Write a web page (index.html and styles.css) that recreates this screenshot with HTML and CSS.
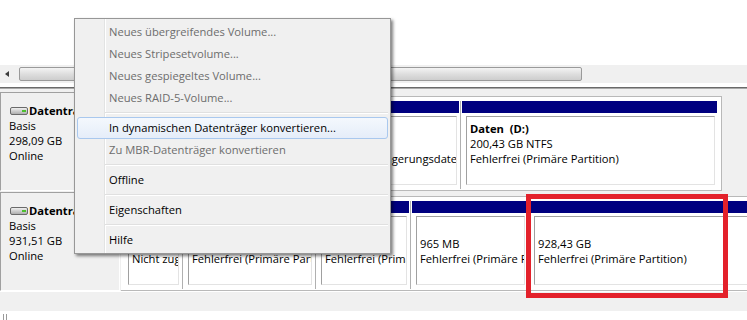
FILE: index.html
```html
<!DOCTYPE html>
<html>
<head>
    <title>Datenträgerverwaltung</title>
    <link rel="stylesheet" href="styles.css">
</head>
<body>
    <div class="top"></div>
    <div class="hscroll">
        <span class="arrow"></span>
        <div class="thumb"></div>
    </div>
    <div class="rule"></div>

    <div class="disks">
        <div class="disk">
            <div class="label">
                <div class="name">
                    <svg width="19" height="9" viewBox="0 0 19 9">
                        <defs>
                            <linearGradient id="hd" x1="0" y1="0" x2="0" y2="1">
                                <stop offset="0" stop-color="#f4f4f4"/>
                                <stop offset="1" stop-color="#a9a9a9"/>
                            </linearGradient>
                        </defs>
                        <rect x="0.5" y="1.5" width="17" height="7" rx="1.5" fill="url(#hd)" stroke="#6a6a6a"/>
                        <rect x="12" y="4" width="4" height="2" fill="#4cc02c"/>
                    </svg>
                    Datenträger 0
                </div>
                <div>Basis</div>
                <div>298,09 GB</div>
                <div>Online</div>
            </div>
            <div class="frame">
                <div class="part" style="width:100px">
                    <div class="hdr"></div>
                    <div class="body"><div class="box">
                        <b>System-reserviert</b><br>100 MB NTFS<br>Fehlerfrei (System, Aktiv, Primäre Partition)
                    </div></div>
                </div>
                <div class="part" style="width:237px">
                    <div class="hdr"></div>
                    <div class="body"><div class="box">
                        <b>(C:)</b><br>97,56 GB NTFS<br>Fehlerfrei (System, Start, Auslagerungsdatei, Absturzabbild, Primäre Partition)
                    </div></div>
                </div>
                <div class="part" style="width:258px">
                    <div class="hdr"></div>
                    <div class="body"><div class="box">
                        <b>Daten&nbsp; (D:)</b><br>200,43 GB NTFS<br>Fehlerfrei (Primäre Partition)
                    </div></div>
                </div>
            </div>
        </div>

        <div class="disk">
            <div class="label">
                <div class="name">
                    <svg width="19" height="9" viewBox="0 0 19 9">
                        <rect x="0.5" y="1.5" width="17" height="7" rx="1.5" fill="url(#hd)" stroke="#6a6a6a"/>
                        <rect x="12" y="4" width="4" height="2" fill="#4cc02c"/>
                    </svg>
                    Datenträger 1
                </div>
                <div>Basis</div>
                <div>931,51 GB</div>
                <div>Online</div>
            </div>
            <div class="frame wide">
                <div class="part" style="width:59px">
                    <div class="hdr free"></div>
                    <div class="body"><div class="box">
                        &nbsp;<br>2 MB<br>Nicht zugeordnet
                    </div></div>
                </div>
                <div class="part" style="width:133px">
                    <div class="hdr"></div>
                    <div class="body"><div class="box">
                        &nbsp;<br>1,10 GB NTFS<br>Fehlerfrei (Primäre Partition)
                    </div></div>
                </div>
                <div class="part" style="width:95px">
                    <div class="hdr"></div>
                    <div class="body"><div class="box">
                        &nbsp;<br>1,02 GB<br>Fehlerfrei (Primäre Partition)
                    </div></div>
                </div>
                <div class="part" style="width:118px">
                    <div class="hdr"></div>
                    <div class="body"><div class="box">
                        &nbsp;<br>965 MB<br>Fehlerfrei (Primäre Partition)
                    </div></div>
                </div>
                <div class="part" style="width:272px">
                    <div class="hdr"></div>
                    <div class="body"><div class="box">
                        &nbsp;<br>928,43 GB<br>Fehlerfrei (Primäre Partition)
                    </div></div>
                </div>
            </div>
        </div>
    </div>
    <div class="foot"></div>
    <div class="tick"></div>

    <div class="menu">
        <div class="item off">Neues übergreifendes Volume...</div>
        <div class="item off">Neues Stripesetvolume...</div>
        <div class="item off">Neues gespiegeltes Volume...</div>
        <div class="item off">Neues RAID-5-Volume...</div>
        <div class="sep"></div>
        <div class="item hot">In dynamischen Datenträger konvertieren...</div>
        <div class="item off">Zu MBR-Datenträger konvertieren</div>
        <div class="sep"></div>
        <div class="item">Offline</div>
        <div class="sep"></div>
        <div class="item">Eigenschaften</div>
        <div class="sep"></div>
        <div class="item">Hilfe</div>
    </div>

    <div class="mark"></div>
</body>
</html>
```

FILE: styles.css
```css
body {
    margin: 0;
    width: 747px;
    height: 320px;
    overflow: hidden;
    position: relative;
    font-family: "Open Sans", "Noto Sans", sans-serif;
    font-size: 11.2px;
    color: #000;
    background-color: #fff;
}

/* horizontal scrollbar of the list view */
.top {
    height: 65px;
}
.hscroll {
    height: 18px;
    background-color: #f0f0f0;
    display: flex;
    align-items: center;
}
.hscroll .arrow {
    width: 0;
    height: 0;
    border-top: 3px solid transparent;
    border-bottom: 3px solid transparent;
    border-right: 4px solid #3c3c3c;
    margin-left: 5px;
}
.hscroll .thumb {
    margin-left: 10px;
    width: 561px;
    height: 12px;
    border: 1px solid #9a9a9a;
    border-radius: 2px;
    background: linear-gradient(#f3f3f3, #dedede 50%, #cdcdcd);
}
.rule {
    margin-top: 4px;
    border-top: 1px solid #6a6a6a;
    border-bottom: 1px solid #a8a8a8;
}

/* disk rows */
.disks {
    background-color: #f0f0f0;
    padding-top: 3px;
}
.disk {
    display: flex;
    height: 99px;
    margin-bottom: 1px;
}
.label {
    flex: none;
    width: 120px;
    box-sizing: border-box;
    border: 1px solid;
    border-color: #a0a0a0 #fff #fff #a0a0a0;
    padding: 10px 0 0 8px;
    line-height: 15px;
    white-space: nowrap;
    overflow: hidden;
}
.label .name {
    font-weight: bold;
    display: flex;
    align-items: center;
}
.label .name svg {
    margin: 0 0 0 1px;
}
.frame {
    flex: none;
    width: 601px;
    box-sizing: border-box;
    margin: 4px 0 0 1px;
    border: 1px solid #b9b9b9;
    border-left: none;
    background-color: #fff;
    padding: 4px 2px 1px 2px;
    display: flex;
}
.frame.wide {
    width: 720px;
}
.part {
    flex: none;
    box-sizing: border-box;
    border-left: 1px solid #b0b0b0;
    padding: 0 1px;
    display: flex;
    flex-direction: column;
}
.part:first-child {
    border-left: none;
}
.part .hdr {
    height: 12px;
    background-color: #00007f;
}
.part .hdr.free {
    background-color: #000;
}
.part .body {
    flex: 1;
    display: flex;
    padding: 3px 2px 4px 4px;
    min-width: 0;
}
.part .box {
    flex: 1;
    min-width: 0;
    border: 1px solid;
    border-color: #a0a0a0 #e3e3e3 #e3e3e3 #a0a0a0;
    padding: 4px 3px;
    line-height: 15px;
    white-space: nowrap;
    overflow: hidden;
}

.foot {
    height: 19px;
    background-color: #f0f0f0;
}
.tick {
    margin: 3px 0 0 3px;
    width: 2px;
    height: 7px;
    border-left: 1px solid #9a9a9a;
    border-right: 1px solid #9a9a9a;
}

/* context menu */
.menu {
    position: absolute;
    left: 74px;
    top: 18px;
    width: 317px;
    box-sizing: border-box;
    border: 1px solid #979797;
    padding: 2px;
    background: linear-gradient(to right, #f0f0f0 29px, #e2e3e3 29px, #e2e3e3 30px, #fff 30px, #fff 31px, #f0f0f0 31px);
    box-shadow: 2px 2px 3px rgba(0,0,0,0.5);
}
.menu .item {
    height: 20px;
    line-height: 20px;
    border: 1px solid transparent;
    border-radius: 3px;
    padding-left: 31px;
    white-space: nowrap;
}
.menu .item.off {
    color: #6d6d6d;
}
.menu .item.hot {
    border-color: #a9c8ee;
    background: linear-gradient(#f4f8fd, #e5edf9);
}
.menu .sep {
    height: 8px;
    margin-left: 28px;
    position: relative;
}
.menu .sep::before {
    content: "";
    position: absolute;
    left: 0;
    right: 0;
    top: 3px;
    height: 1px;
    background-color: #e0e0e0;
    border-bottom: 1px solid #fff;
}

/* red highlight drawn on top of the screenshot */
.mark {
    position: absolute;
    left: 526px;
    top: 194px;
    width: 202px;
    height: 104px;
    box-sizing: border-box;
    border: 5px solid #e3212b;
}
```
